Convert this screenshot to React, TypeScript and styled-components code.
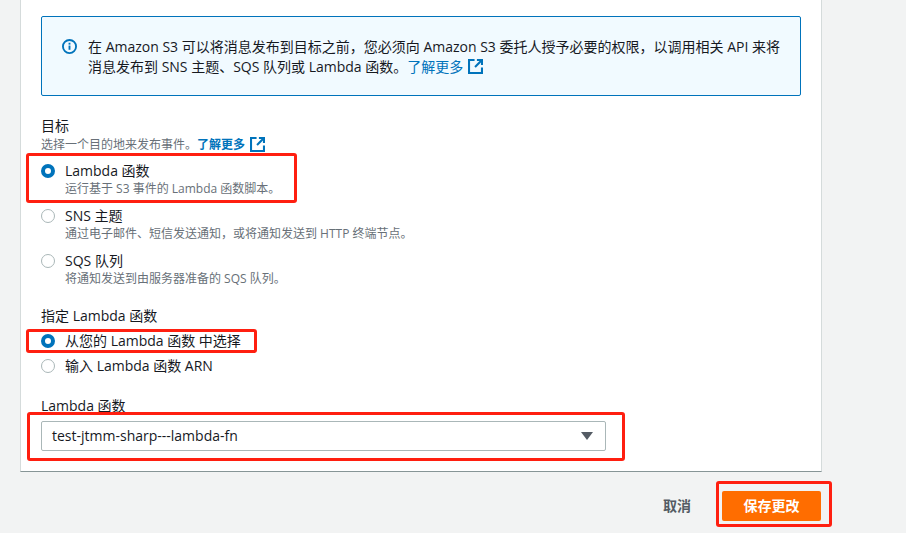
import styled, { createGlobalStyle } from "styled-components";

const GlobalStyle = createGlobalStyle`
  html, body {
    margin: 0;
    padding: 0;
    background: #f2f3f3;
    overflow: hidden;
  }
  *, *::after {
    box-sizing: border-box;
  }
  body {
    font-family: "Open Sans", "Noto Sans CJK SC", sans-serif;
    font-size: 14px;
    line-height: 20px;
    color: #16191f;
  }
`;

function ExternalIcon() {
  return (
    <IconSvg width={15} height={15} viewBox="0 0 16 16" fill="none" stroke="#0073bb" strokeWidth="2.2">
      <path d="M7 1.1H1.1v13.8h13.8V9" />
      <path d="M9.5 1.1h5.4v5.4" />
      <path d="M14.9 1.1L7.5 8.5" />
    </IconSvg>
  );
}

function Radio({ checked = false }: { checked?: boolean }) {
  return <RadioDot $checked={checked} />;
}

function App() {
  return (
    <Page>
      <GlobalStyle />
      <Panel>
        <Alert>
          <svg width="15" height="15" viewBox="0 0 16 16" fill="none">
            <circle cx="8" cy="8" r="7" stroke="#0073bb" strokeWidth="2" />
            <rect x="7" y="7" width="2" height="4.5" fill="#0073bb" />
            <rect x="7" y="4" width="2" height="2" fill="#0073bb" />
          </svg>
          <AlertText>
            在 Amazon S3 可以将消息发布到目标之前，您必须向 Amazon S3 委托人授予必要的权限，以调用相关 API 来将消息发布到 SNS 主题、SQS 队列或 Lambda 函数。
            <AlertLink>
              了解更多 <ExternalIcon />
            </AlertLink>
          </AlertText>
        </Alert>

        <Section $top={20}>
          <Label>目标</Label>
          <Hint>
            选择一个目的地来发布事件。<HintLink>了解更多</HintLink> <ExternalIcon />
          </Hint>
          <Options>
            <Marked $inset="-8px auto -6px -15px" $width={271}>
              <Option>
                <Radio checked />
                <div>
                  <OptionTitle>Lambda 函数</OptionTitle>
                  <OptionHint>运行基于 S3 事件的 Lambda 函数脚本。</OptionHint>
                </div>
              </Option>
            </Marked>
            <Option>
              <Radio />
              <div>
                <OptionTitle>SNS 主题</OptionTitle>
                <OptionHint>通过电子邮件、短信发送通知，或将通知发送到 HTTP 终端节点。</OptionHint>
              </div>
            </Option>
            <Option>
              <Radio />
              <div>
                <OptionTitle>SQS 队列</OptionTitle>
                <OptionHint>将通知发送到由服务器准备的 SQS 队列。</OptionHint>
              </div>
            </Option>
          </Options>
        </Section>

        <Section $top={19}>
          <Label>指定 Lambda 函数</Label>
          <Choices>
            <Marked $inset="-2px auto -2px -15px" $width={231}>
              <Option>
                <Radio checked />
                <OptionTitle>从您的 Lambda 函数 中选择</OptionTitle>
              </Option>
            </Marked>
            <Option>
              <Radio />
              <OptionTitle>输入 Lambda 函数 ARN</OptionTitle>
            </Option>
          </Choices>
        </Section>

        <Section $top={20}>
          <Label>Lambda 函数</Label>
          <SelectField>
            <Marked $inset="-9px -19px -10px -14px">
              <Select>
                <span>test-jtmm-sharp---lambda-fn</span>
                <Caret />
              </Select>
            </Marked>
          </SelectField>
        </Section>
      </Panel>

      <Footer>
        <CancelButton>取消</CancelButton>
        <Marked $inset="-10px -11px -6px -6px">
          <SaveButton>保存更改</SaveButton>
        </Marked>
      </Footer>
    </Page>
  );
}

export default App;

const Page = styled.div`
  width: 906px;
  height: 533px;
  padding: 0 84px 0 20px;
  overflow: hidden;
`;

const Panel = styled.section`
  height: 472px;
  padding: 16px 20px 0 20px;
  background: #fff;
  border-left: 1px solid #d5dbdb;
  border-right: 1px solid #d5dbdb;
  border-bottom: 1px solid #879596;
`;

const Alert = styled.div`
  display: flex;
  column-gap: 11px;
  height: 80px;
  padding: 20px 18px 0 20px;
  background: #f1faff;
  border: 1px solid #0073bb;
  border-radius: 2px;
  > svg {
    flex: none;
    margin-top: 2px;
  }
`;

const AlertText = styled.p`
  margin: 0;
  width: 716px;
`;

const AlertLink = styled.a`
  color: #0073bb;
  svg {
    margin-left: 1px;
    vertical-align: -2px;
  }
`;

const IconSvg = styled.svg`
  vertical-align: -3px;
  margin-left: 2px;
`;

const Section = styled.div<{ $top: number }>`
  margin-top: ${(p) => p.$top}px;
`;

const Label = styled.div`
  line-height: 20px;
`;

const Hint = styled.div`
  margin-top: 1px;
  font-size: 12px;
  line-height: 16px;
  color: #687078;
`;

const HintLink = styled.a`
  color: #0073bb;
  font-weight: 700;
`;

const Options = styled.div`
  display: flex;
  flex-direction: column;
  row-gap: 9px;
  margin-top: 8px;
`;

const Choices = styled.div`
  display: flex;
  flex-direction: column;
  row-gap: 5px;
  margin-top: 5px;
`;

const Marked = styled.div<{ $inset: string; $width?: number }>`
  position: relative;
  &::after {
    content: "";
    position: absolute;
    inset: ${(p) => p.$inset};
    ${(p) => (p.$width ? `width: ${p.$width}px;` : "")}
    border: 3px solid #ff1f10;
    border-radius: 3px;
    pointer-events: none;
  }
`;

const Option = styled.div`
  display: flex;
  column-gap: 10px;
`;

const RadioDot = styled.span<{ $checked: boolean }>`
  flex: none;
  width: 14px;
  height: 14px;
  margin-top: 3px;
  border-radius: 50%;
  background: #fff;
  border: ${(p) => (p.$checked ? "4px solid #0073bb" : "1px solid #aab7b8")};
`;

const OptionTitle = styled.div`
  line-height: 20px;
`;

const OptionHint = styled.div`
  font-size: 12px;
  line-height: 16px;
  color: #687078;
`;

const SelectField = styled.div`
  width: 565px;
  margin-top: 5px;
`;

const Select = styled.div`
  display: flex;
  align-items: center;
  justify-content: space-between;
  height: 30px;
  padding: 0 12px 0 10px;
  background: #fff;
  border: 1px solid #aab7b8;
  border-radius: 2px;
`;

const Caret = styled.span`
  width: 0;
  height: 0;
  border-left: 6px solid transparent;
  border-right: 6px solid transparent;
  border-top: 8px solid #545b64;
`;

const Footer = styled.div`
  display: flex;
  align-items: center;
  justify-content: flex-end;
  column-gap: 31px;
  padding: 19px 1px 0 0;
`;

const CancelButton = styled.button`
  border: none;
  background: none;
  padding: 0;
  font: inherit;
  font-weight: 700;
  color: #545b64;
`;

const SaveButton = styled.button`
  display: block;
  width: 99px;
  height: 30px;
  padding: 0;
  border: none;
  border-radius: 2px;
  background: #ff6d00;
  font: inherit;
  font-weight: 700;
  color: #fff;
`;
